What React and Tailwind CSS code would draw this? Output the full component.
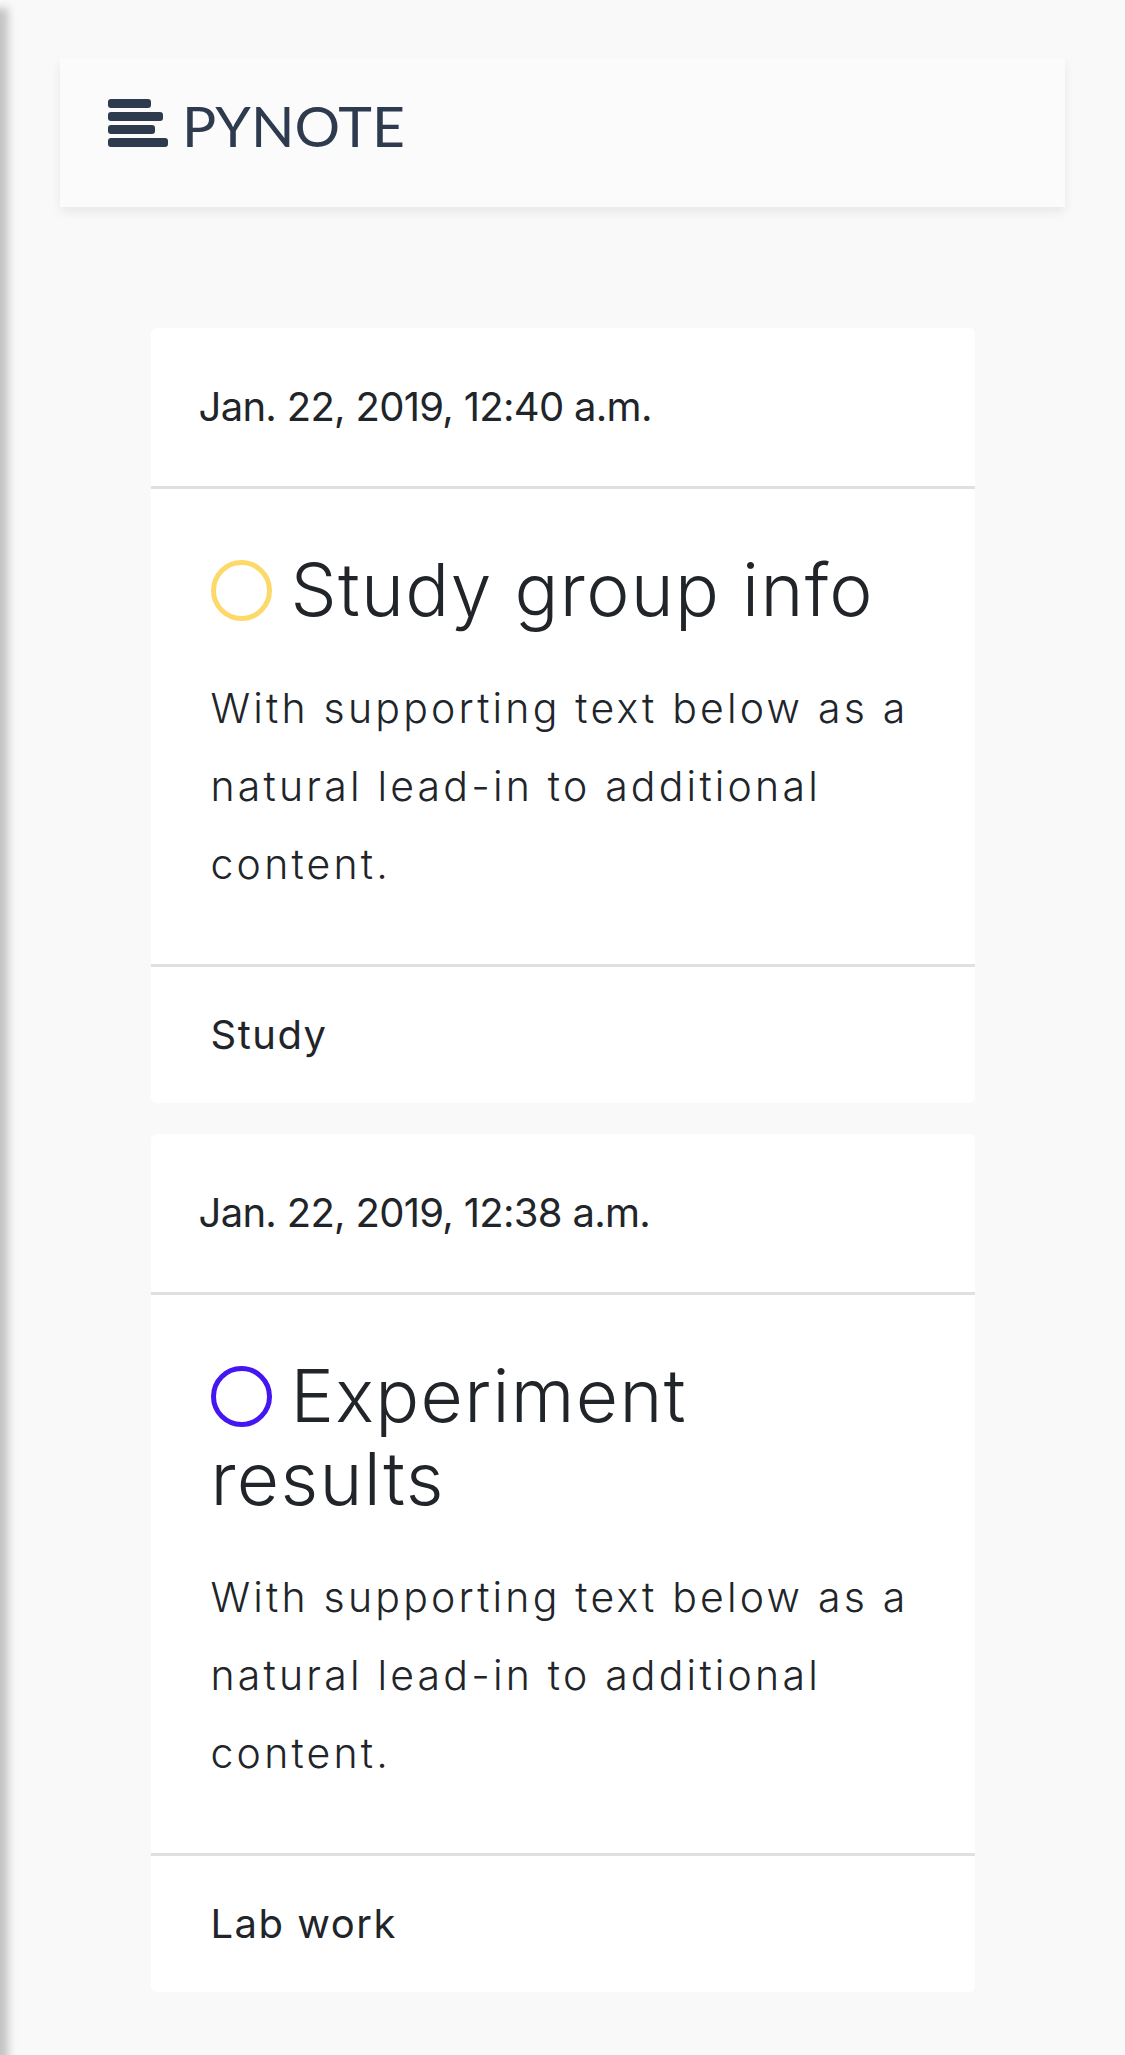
import React from "react";

const notes = [
  {
    date: "Jan. 22, 2019, 12:40 a.m.",
    title: "Study group info",
    color: "border-[#fcd968]",
    body: "With supporting text below as a natural lead-in to additional content.",
    tag: "Study",
  },
  {
    date: "Jan. 22, 2019, 12:38 a.m.",
    title: "Experiment results",
    color: "border-[#4316f2]",
    body: "With supporting text below as a natural lead-in to additional content.",
    tag: "Lab work",
  },
];

function Logo() {
  return (
    <svg width="60" height="48" viewBox="0 0 60 48" className="mt-[9px] shrink-0">
      <rect x="0" y="0" width="43" height="9" rx="3" fill="#2e3b4e" />
      <rect x="0" y="13" width="55" height="9" rx="3" fill="#2e3b4e" />
      <rect x="0" y="26" width="47" height="9" rx="3" fill="#2e3b4e" />
      <rect x="0" y="39" width="60" height="9" rx="3" fill="#2e3b4e" />
    </svg>
  );
}

function NoteCard({ note }) {
  return (
    <div className="bg-white rounded-[6px] overflow-hidden text-[#212529]">
      <div className="h-[161px] flex items-center px-[48px] border-b-[3px] border-[#e0e0e0] text-[40px] font-normal tracking-[-0.7px]">
        {note.date}
      </div>
      <div className="px-[60px] pt-[59px] pb-[61px]">
        <h2 className="text-[73px] font-light leading-[83px] tracking-[1.3px] mb-[38px]">
          <span
            className={`inline-block align-middle w-[61px] h-[61px] rounded-full border-[5px] ${note.color} mr-[19px] relative top-[-6px]`}
          ></span>
          {note.title}
        </h2>
        <p className="text-[41px] font-light leading-[78px] tracking-[3.2px]">{note.body}</p>
      </div>
      <div className="h-[139px] flex items-center px-[60px] border-t-[3px] border-[#e0e0e0] text-[40px] font-normal tracking-[1.5px]">
        {note.tag}
      </div>
    </div>
  );
}

export default function App() {
  return (
    <div
      className="relative min-h-[2055px] bg-[#f9f9f9] overflow-hidden"
      style={{ fontFamily: "Inter, 'Noto Sans', sans-serif" }}
    >
      <div className="absolute left-[-8px] top-[8px] bottom-[-20px] w-[16px] bg-[#c2c2c2] blur-[4px]"></div>
      <div className="pt-[58px] px-[60px]">
        <div className="h-[149px] bg-[#fbfbfb] shadow-[0_5px_10px_rgba(0,0,0,0.07)] pl-[48px] pt-[32px]">
          <div className="flex items-start gap-[14px]">
            <Logo />
            <span
              className="text-[57px] leading-[1.2] text-[#2e3b4e] mt-[1px]"
              style={{ fontFamily: "Lato, 'Open Sans', sans-serif" }}
            >
              PYNOTE
            </span>
          </div>
        </div>
      </div>
      <div className="mt-[121px] w-[824px] mx-auto flex flex-col gap-[31px]">
        {notes.map((n) => (
          <NoteCard key={n.date} note={n} />
        ))}
      </div>
    </div>
  );
}
